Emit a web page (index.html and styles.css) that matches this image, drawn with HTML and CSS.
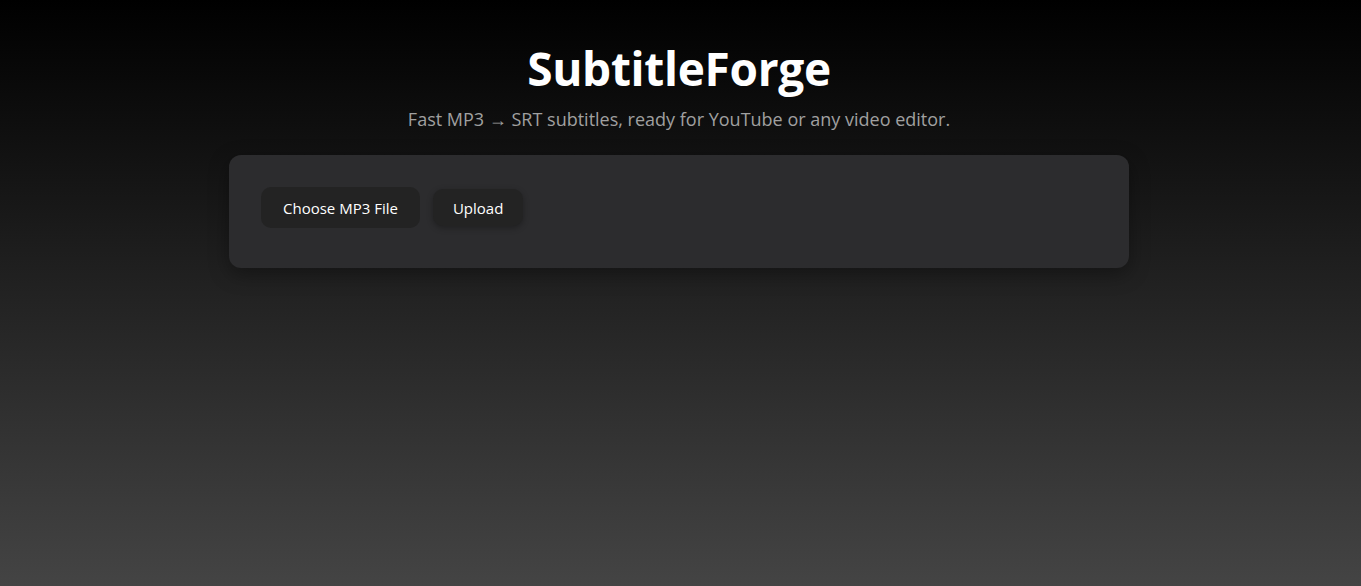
FILE: index.html
```html
<!DOCTYPE html>
<html lang="en">
<head>
<meta charset="utf-8">
<title>SubtitleForge</title>
<link rel="stylesheet" href="styles.css">
</head>
<body>
<main class="page">
  <header class="hero">
    <h1 class="title">SubtitleForge</h1>
    <p class="tagline">Fast MP3 → SRT subtitles, ready for YouTube or any video editor.</p>
  </header>
  <section class="card">
    <div class="actions">
      <label class="btn btn-file">Choose MP3 File</label>
      <button class="btn btn-upload" type="button">Upload</button>
    </div>
  </section>
</main>
</body>
</html>
```

FILE: styles.css
```css
html, body {
  margin: 0;
  padding: 0;
  height: 100%;
}
body {
  background: linear-gradient(to bottom, #000000 0%, #444444 100%);
  font-family: "Open Sans", "Noto Sans", sans-serif;
  color: #ffffff;
  min-height: 586px;
}
.page {
  display: flex;
  flex-direction: column;
  align-items: center;
  padding-top: 38px;
  padding-right: 3px;
}
.hero {
  text-align: center;
}
.title {
  margin: 0;
  font-size: 46px;
  font-weight: 700;
  line-height: 60px;
  letter-spacing: -0.3px;
  color: #ffffff;
}
.tagline {
  margin: 9px 0 0;
  font-size: 18px;
  line-height: 24px;
  color: #a0a0a0;
}
.card {
  margin-top: 24px;
  width: 900px;
  box-sizing: border-box;
  height: 113px;
  padding: 32px;
  background: #2c2c2e;
  border-radius: 12px;
  box-shadow: 0 6px 20px rgba(0, 0, 0, 0.35);
}
.actions {
  display: flex;
  align-items: center;
  gap: 13px;
}
.btn {
  font-family: inherit;
  color: #ffffff;
  background: #232323;
  border: none;
  border-radius: 10px;
  font-size: 15px;
  cursor: pointer;
}
.btn-file {
  display: inline-flex;
  align-items: center;
  height: 41px;
  padding: 0 22px;
}
.btn-upload {
  height: 37px;
  padding: 0 20px;
  font-weight: 500;
  box-shadow: 0 2px 6px rgba(0, 0, 0, 0.3);
}
```
